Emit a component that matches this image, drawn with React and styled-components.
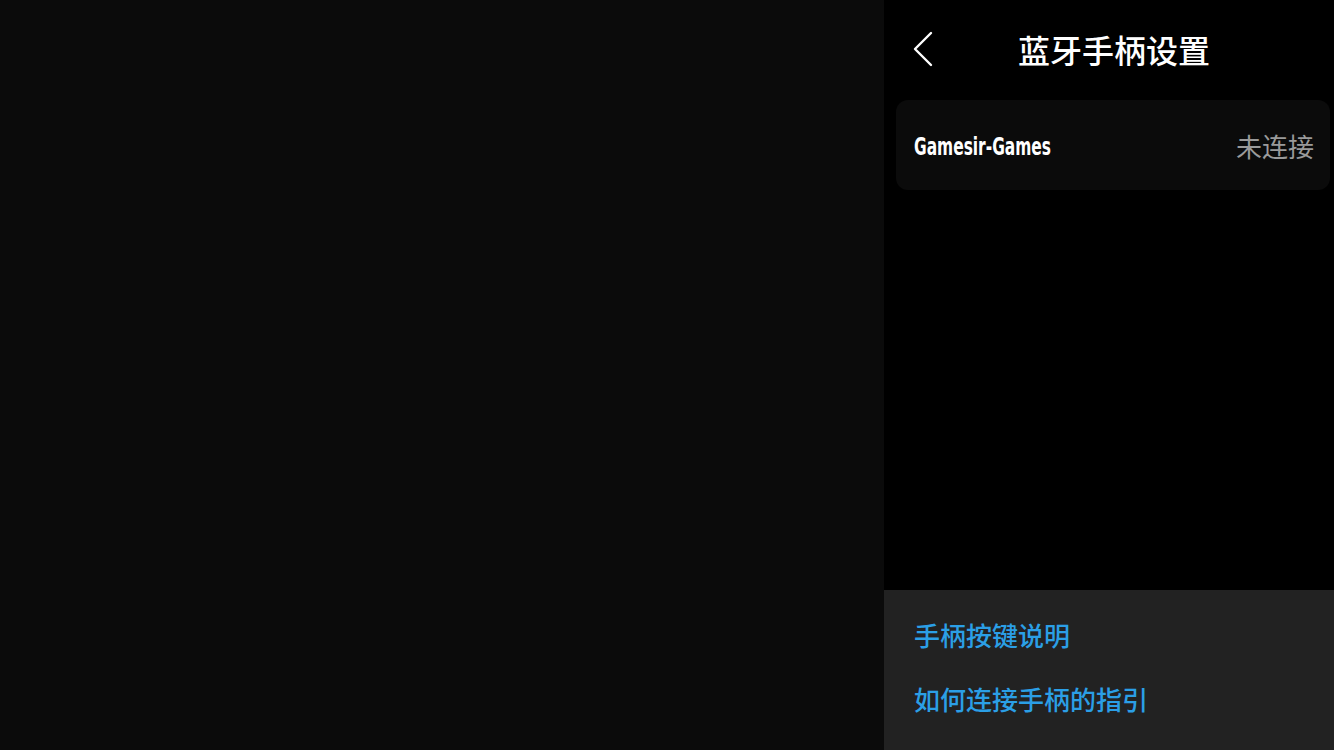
import React from "react";
import styled, { createGlobalStyle } from "styled-components";

const Global = createGlobalStyle`
  html, body { margin: 0; padding: 0; background: #0b0b0b; }
  body { font-family: "Noto Sans CJK SC", "Noto Sans", sans-serif; }
`;

const Screen = styled.div`
  display: flex;
  width: 1334px;
  height: 750px;
  overflow: hidden;
  background: #0b0b0b;
`;

const Backdrop = styled.div`
  flex: 1;
  background: #0b0b0b;
`;

const Panel = styled.aside`
  width: 450px;
  height: 100%;
  background: #000;
  display: flex;
  flex-direction: column;
`;

const Header = styled.header`
  height: 100px;
  display: flex;
  align-items: center;
  position: relative;
  padding-left: 28px;
  padding-bottom: 2px;
  box-sizing: border-box;
`;

const BackButton = styled.button`
  width: 24px;
  height: 40px;
  padding: 0;
  border: 0;
  background: none;
  display: flex;
  align-items: center;
  justify-content: center;
  cursor: pointer;
`;

const Title = styled.h1`
  position: absolute;
  left: 0;
  right: 0;
  top: 0;
  height: 98px;
  margin: 0;
  display: flex;
  align-items: center;
  justify-content: center;
  padding-left: 10px;
  font-family: "Noto Sans CJK SC", sans-serif;
  font-size: 32px;
  font-weight: 500;
  color: #fff;
  pointer-events: none;
`;

const Body = styled.div`
  flex: 1;
  padding-left: 12px;
  padding-right: 4px;
`;

const DeviceCard = styled.div`
  height: 90px;
  background: #0b0b0b;
  border-radius: 12px;
  display: flex;
  align-items: center;
  justify-content: space-between;
  padding: 0 16px 0 18px;
  box-sizing: border-box;
`;

const DeviceName = styled.span`
  font-family: "DejaVu Sans Condensed", "DejaVu Sans", sans-serif;
  font-weight: bold;
  font-size: 24px;
  color: #fff;
  display: inline-block;
  margin-top: 4px;
  transform: scaleX(0.715);
  transform-origin: left center;
`;

const Status = styled.span`
  font-family: "Noto Sans CJK SC", sans-serif;
  font-size: 26px;
  color: #9a9a9a;
`;

const Footer = styled.div`
  height: 160px;
  background: #222;
  display: flex;
  flex-direction: column;
  padding: 20px 0 0 30px;
  gap: 14px;
  box-sizing: border-box;
`;

const Link = styled.a`
  font-family: "Noto Sans CJK SC", sans-serif;
  font-size: 26px;
  font-weight: 500;
  line-height: 50px;
  color: #2b9fe6;
  text-decoration: none;
  cursor: pointer;
`;

export default function App() {
  return (
    <>
      <Global />
      <Screen>
        <Backdrop />
        <Panel>
          <Header>
            <BackButton aria-label="返回">
              <svg width="24" height="40" viewBox="0 0 24 40">
                <path d="M19 4 L3 20 L19 36" fill="none" stroke="#fff" strokeWidth="2.4" strokeLinecap="round" strokeLinejoin="round" />
              </svg>
            </BackButton>
            <Title>蓝牙手柄设置</Title>
          </Header>
          <Body>
            <DeviceCard>
              <DeviceName>Gamesir-Games</DeviceName>
              <Status>未连接</Status>
            </DeviceCard>
          </Body>
          <Footer>
            <Link>手柄按键说明</Link>
            <Link>如何连接手柄的指引</Link>
          </Footer>
        </Panel>
      </Screen>
    </>
  );
}
